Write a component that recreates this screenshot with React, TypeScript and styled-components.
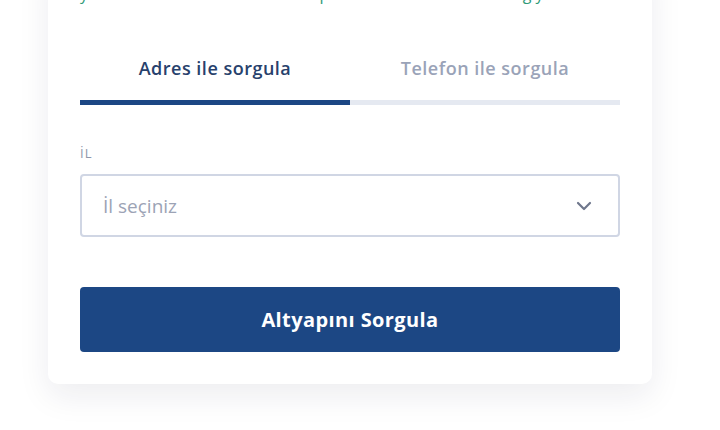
import React, { useState } from "react";
import styled, { createGlobalStyle } from "styled-components";

const GlobalStyle = createGlobalStyle`
  body {
    margin: 0;
    background: #ffffff;
    font-family: "Open Sans", "Liberation Sans", sans-serif;
  }
`;

const tabs = ["Adres ile sorgula", "Telefon ile sorgula"];

const App = () => {
  const [active, setActive] = useState<number>(0);

  return (
    <Page>
      <GlobalStyle />
      <Card>
        <Intro>yeni adresinizde internet hızı ve paket tarifeleri hakkında bilgiyi edinin</Intro>
        <TabList>
          {tabs.map((t, i) => (
            <Tab key={t} active={i === active} onClick={() => setActive(i)}>
              {t}
            </Tab>
          ))}
        </TabList>
        <Label>İL</Label>
        <Select>
          <Placeholder>İl seçiniz</Placeholder>
          <svg width="16" height="10" viewBox="0 0 16 10">
            <path d="M2 2l6 6 6-6" fill="none" stroke="#6f778c" strokeWidth="2.2" strokeLinecap="round" strokeLinejoin="round" />
          </svg>
        </Select>
        <Button>Altyapını Sorgula</Button>
      </Card>
    </Page>
  );
};

export default App;

const Page = styled.div`
  width: 720px;
  height: 430px;
  overflow: hidden;
  padding-left: 48px;
  box-sizing: border-box;
`;

const Card = styled.div`
  width: 604px;
  margin-top: -40px;
  padding: 22px 32px 32px;
  box-sizing: border-box;
  background: #ffffff;
  border-radius: 10px;
  box-shadow: 0 12px 32px rgba(20, 30, 60, 0.08);
  display: flex;
  flex-direction: column;
`;

const Intro = styled.div`
  font-size: 16px;
  line-height: 24px;
  color: #2f9a78;
  white-space: nowrap;
`;

const TabList = styled.div`
  display: flex;
  margin-top: 50px;
`;

const Tab = styled.div<{ active?: boolean }>`
  flex: 1;
  text-align: center;
  font-size: 18px;
  letter-spacing: 0.5px;
  line-height: 24px;
  font-weight: 600;
  padding-bottom: 20px;
  color: ${({ active }) => (active ? "#27416c" : "#9aa3b8")};
  border-bottom: 5px solid ${({ active }) => (active ? "#1c4784" : "#e5e9f1")};
  cursor: pointer;
`;

const Label = styled.div`
  margin-top: 40px;
  font-size: 13px;
  letter-spacing: 1px;
  line-height: 16px;
  color: #8f97ab;
`;

const Select = styled.div`
  margin-top: 13px;
  height: 63px;
  box-sizing: border-box;
  border: 2px solid #d0d6e4;
  border-radius: 4px;
  display: flex;
  align-items: center;
  justify-content: space-between;
  padding: 0 26px 0 21px;
`;

const Placeholder = styled.span`
  font-size: 19px;
  color: #9ca3b5;
`;

const Button = styled.button`
  margin-top: 50px;
  height: 65px;
  border: none;
  border-radius: 4px;
  background: #1c4784;
  color: #ffffff;
  font-family: "Open Sans", "Liberation Sans", sans-serif;
  font-size: 20px;
  letter-spacing: 0.4px;
  font-weight: 700;
  cursor: pointer;
`;
